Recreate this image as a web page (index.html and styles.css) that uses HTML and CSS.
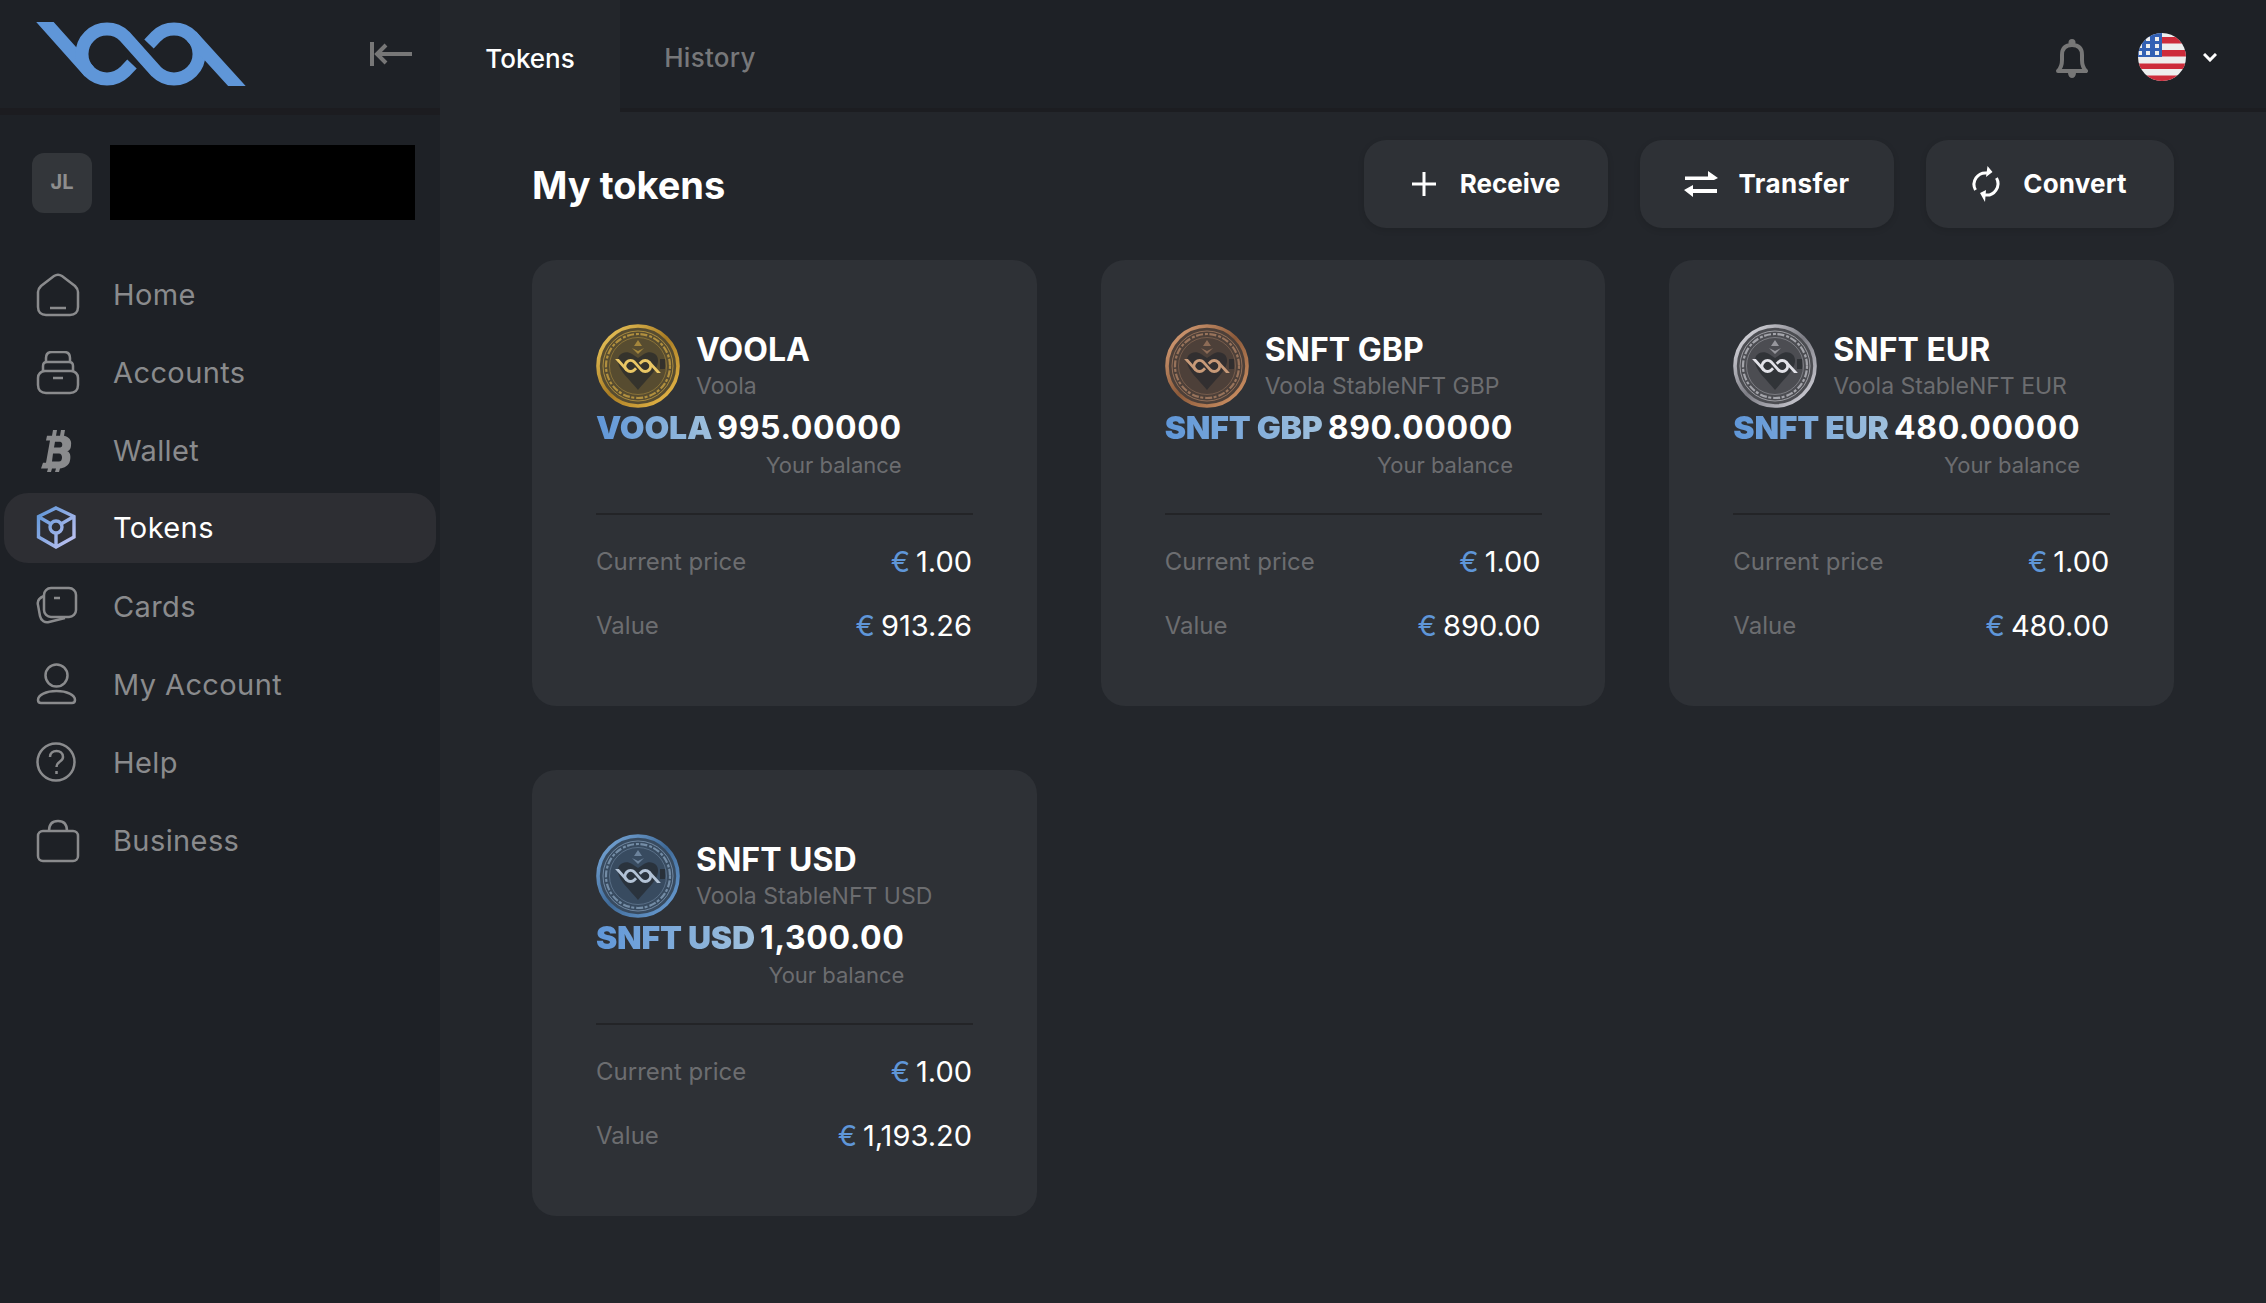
FILE: index.html
```html
<!DOCTYPE html>
<html lang="en">
<head>
<meta charset="utf-8">
<title>My tokens</title>
<link rel="stylesheet" href="styles.css">
</head>
<body>
<svg class="defs" width="0" height="0" aria-hidden="true">
  <defs>
    <linearGradient id="gold" x1="0" y1="0" x2="1" y2="1"><stop offset="0" stop-color="#f3cf62"/><stop offset=".5" stop-color="#a97c23"/><stop offset="1" stop-color="#efc04e"/></linearGradient>
    <linearGradient id="bronze" x1="0" y1="0" x2="1" y2="1"><stop offset="0" stop-color="#e0a77e"/><stop offset=".5" stop-color="#8c5a3a"/><stop offset="1" stop-color="#d89a6b"/></linearGradient>
    <linearGradient id="silver" x1="0" y1="0" x2="1" y2="1"><stop offset="0" stop-color="#e8e8ee"/><stop offset=".5" stop-color="#7d7d85"/><stop offset="1" stop-color="#dcdce4"/></linearGradient>
    <linearGradient id="steel" x1="0" y1="0" x2="1" y2="1"><stop offset="0" stop-color="#7eaee0"/><stop offset=".5" stop-color="#3f6a98"/><stop offset="1" stop-color="#6fa3da"/></linearGradient>
    <linearGradient id="tok" gradientUnits="userSpaceOnUse" x1="2" y1="5" x2="40" y2="38"><stop offset="0" stop-color="#5f96d8"/><stop offset="1" stop-color="#c3c4f2"/></linearGradient>
    <symbol id="mark" viewBox="0 0 210 64">
      <g fill="none" stroke="currentColor" stroke-width="13">
        <path d="M0 -10 53.3 49.7A25 25 0 0 0 88.7 49.7L96 42"/>
        <path d="M53.3 49.7A25 25 0 0 1 88.7 14.3L120.3 49.7A25 25 0 0 0 155.7 14.3"/>
        <path d="M113 22 120.3 14.3A25 25 0 0 1 155.7 14.3L210 74"/>
      </g>
    </symbol>
    <symbol id="coin" viewBox="0 0 84 84">
      <circle cx="42" cy="42" r="40" fill="var(--face)" stroke="var(--rim)" stroke-width="3.6"/>
      <circle cx="42" cy="42" r="35" fill="none" stroke="var(--ink)" stroke-width=".8" opacity=".8"/>
      <circle cx="42" cy="42" r="32" fill="none" stroke="var(--ink)" stroke-width="2.2" stroke-dasharray="3 1.5 7 2" opacity=".7"/>
      <circle cx="42" cy="42" r="28.5" fill="none" stroke="var(--ink)" stroke-width=".7" opacity=".55"/>
      <path d="M22 38C21 29 30 26 36 30L42 34 48 30C54 26 63 29 62 38 61 47 50 56 42 66 34 56 23 47 22 38Z" fill="#23262b" opacity=".65"/>
      <path d="M42 16 46 22H38ZM36 24 42 30 48 24 42 27Z" fill="var(--ink)" opacity=".6"/>
      <rect x="64" y="35" width="5" height="10" fill="#23262b" opacity=".7"/>
      <use href="#mark" x="19" y="35" width="46" height="14"/>
    </symbol>
  </defs>
</svg>
<div class="app">
  <aside class="sidebar">
    <div class="brand">
      <svg class="logo"><use href="#mark"/></svg>
      <svg class="collapse" viewBox="0 0 42 24"><path fill="none" stroke="#777" stroke-width="4" d="M2 0V24M42 12H8M16 3 7 12 16 21"/></svg>
    </div>
    <div class="user">
      <div class="avatar">JL</div>
      <div class="redact"></div>
    </div>
    <nav class="nav">
      <a class="item"><svg class="ico" viewBox="0 0 44 44"><path d="M2 19C2 16 3 15 5 13L18 3C21 1 23 1 26 3L39 13C41 15 42 16 42 19V34C42 39 39 42 34 42H10C5 42 2 39 2 34ZM14 35H30"/></svg><span>Home</span></a>
      <a class="item"><svg class="ico" viewBox="0 0 44 44"><path d="M2 27C2 23 5 20 9 20H35C39 20 42 23 42 27V34C42 39 39 42 34 42H10C5 42 2 39 2 34ZM7 20V15C7 12 9 11 11 11H33C35 11 37 12 37 15V20M10 11V7C10 3 12 1 16 1H28C32 1 34 3 34 7V11M17 27H27"/></svg><span>Accounts</span></a>
      <a class="item"><svg class="ico fill" viewBox="0 0 44 44"><g transform="translate(1 1) scale(1 1.17)"><path d="M16 0H20L19 5H23L24 0H28L27 5C32 6 35 9 34 13 34 16 32 18 30 18 33 19 34 22 33 26 32 31 27 32 23 33L22 36H18L19 33H15L14 36H10L11 33H4L6 28H9L13 9H9L10 5H15ZM18 10 17 15H23C26 15 26 10 23 10ZM16 20 15 27H22C26 27 26 20 22 20Z"/></g></svg><span>Wallet</span></a>
      <a class="item active"><svg class="ico tok" viewBox="0 0 44 44"><path d="M20 2 38 10.500V31L20 41 2.500 31V10.500ZM3 11 15 18M37 11 25 18M20 27V40"/><circle cx="20" cy="21" r="6"/></svg><span>Tokens</span></a>
      <a class="item"><svg class="ico" viewBox="0 0 44 44"><rect x="8" y="3" width="32" height="29" rx="7"/><path d="M8 11C3 13 1 16 2 20L4 31C5 36 9 38 13 37L29 33M18 13H24"/></svg><span>Cards</span></a>
      <a class="item"><svg class="ico" viewBox="0 0 44 44"><circle cx="20.500" cy="12.500" r="11"/><path d="M2 37C2 32 10 28 20.500 28S39 32 39 37C39 39 38 40 36 40H5C3 40 2 39 2 37Z"/></svg><span>My Account</span></a>
      <a class="item"><svg class="ico" viewBox="0 0 44 44"><circle cx="20" cy="21" r="18.500"/><path d="M14 16C14 12 17 10 20.500 10S27 12 27 16C27 21 20.500 20 20.500 26M20.500 30V33"/></svg><span>Help</span></a>
      <a class="item"><svg class="ico" viewBox="0 0 44 44"><rect x="2" y="12" width="40" height="30" rx="5"/><path d="M13 12C13 6 16 2 22 2S31 6 31 12"/></svg><span>Business</span></a>
    </nav>
  </aside>
  <div class="content">
    <header class="topbar">
      <div class="tabs">
        <a class="tab current">Tokens</a>
        <a class="tab">History</a>
      </div>
      <div class="tools">
        <svg class="bell" viewBox="0 0 32 39"><path fill="none" stroke="#777" stroke-width="4" stroke-linejoin="round" d="M2 32C5 29 6 26 6 21V16C6 9 10 6 16 6S26 9 26 16V21C26 26 27 29 30 32Z"/><circle cx="16" cy="3.500" r="3.500" fill="#777"/><path fill="#777" d="M12 34H20C20 37 18 39 16 39S12 37 12 34Z"/></svg>
        <svg class="flag" viewBox="0 0 48 48">
          <clipPath id="fc"><circle cx="24" cy="24" r="24"/></clipPath>
          <g clip-path="url(#fc)">
            <rect width="48" height="48" fill="#eee"/>
            <path fill="#cd2c3b" d="M24 4H48V10.500H24ZM24 17H48V23.500H24ZM0 30.500H48V36H0ZM0 42.500H48V48H0Z"/>
            <rect width="24" height="24" fill="#3260b4"/>
            <path fill="#eee" d="M8 4h4v4H8zM17 4h4v4h-4zM1 4h3v4H1zM8 11h4v4H8zM17 11h4v4h-4zM1 11h3v4H1zM8 18h4v4H8zM17 18h4v4h-4zM1 18h3v4H1z"/>
          </g>
        </svg>
        <svg class="chev" viewBox="0 0 14 9"><path fill="none" stroke="#fff" stroke-width="3" d="M1 1 7 7 13 1"/></svg>
      </div>
    </header>
    <main class="main">
      <div class="head">
        <h1>My tokens</h1>
        <div class="actions">
          <button class="btn btn-receive"><svg class="i-plus" viewBox="0 0 24 24"><path d="M12 0V24M0 12H24"/></svg>Receive</button>
          <button class="btn btn-transfer"><svg class="i-swap" viewBox="0 0 34 26"><path class="solid" d="M1 5.500H24V0L34 7 30 9H1ZM33 18V22H9V26L0 19 9 14V18Z"/></svg>Transfer</button>
          <button class="btn btn-convert"><svg class="i-sync" viewBox="0 0 26 36"><path d="M2.500 24A11.500 11.500 0 0 1 14 7M23.500 12A11.500 11.500 0 0 1 12 29"/><path class="solid" d="M14.500 0 19.500 6 13 11ZM7 27 13 24 12 36Z"/></svg>Convert</button>
        </div>
      </div>
      <section class="grid">
        <article class="card">
          <div class="token"><svg class="coin c-gold"><use href="#coin"/></svg><div><div class="name">VOOLA</div><div class="sub">Voola</div></div></div>
          <div class="bal-wrap"><div class="bal"><b class="grad">VOOLA</b> 995.00000</div><div class="bal-note">Your balance</div></div>
          <div class="rule"></div>
          <div class="row"><span>Current price</span><em><i>€</i>1.00</em></div>
          <div class="row"><span>Value</span><em><i>€</i>913.26</em></div>
        </article>
        <article class="card">
          <div class="token"><svg class="coin c-bronze"><use href="#coin"/></svg><div><div class="name">SNFT GBP</div><div class="sub">Voola StableNFT GBP</div></div></div>
          <div class="bal-wrap"><div class="bal"><b class="grad">SNFT GBP</b> 890.00000</div><div class="bal-note">Your balance</div></div>
          <div class="rule"></div>
          <div class="row"><span>Current price</span><em><i>€</i>1.00</em></div>
          <div class="row"><span>Value</span><em><i>€</i>890.00</em></div>
        </article>
        <article class="card">
          <div class="token"><svg class="coin c-silver"><use href="#coin"/></svg><div><div class="name">SNFT EUR</div><div class="sub">Voola StableNFT EUR</div></div></div>
          <div class="bal-wrap"><div class="bal"><b class="grad">SNFT EUR</b> 480.00000</div><div class="bal-note">Your balance</div></div>
          <div class="rule"></div>
          <div class="row"><span>Current price</span><em><i>€</i>1.00</em></div>
          <div class="row"><span>Value</span><em><i>€</i>480.00</em></div>
        </article>
        <article class="card">
          <div class="token"><svg class="coin c-steel"><use href="#coin"/></svg><div><div class="name">SNFT USD</div><div class="sub">Voola StableNFT USD</div></div></div>
          <div class="bal-wrap"><div class="bal"><b class="grad">SNFT USD</b> 1,300.00</div><div class="bal-note">Your balance</div></div>
          <div class="rule"></div>
          <div class="row"><span>Current price</span><em><i>€</i>1.00</em></div>
          <div class="row"><span>Value</span><em><i>€</i>1,193.20</em></div>
        </article>
      </section>
    </main>
  </div>
</div>
</body>
</html>
```
FILE: styles.css
```css
* { box-sizing: border-box; }
html, body { margin: 0; height: 100%; }
body { background: #23262b; color: #fff; font-family: Inter, "Noto Sans", sans-serif; overflow: hidden; }
.defs { display: block; height: 0; position: absolute; }
.app { display: flex; height: 1303px; }
.sidebar { width: 440px; flex: none; background: #1e2126; }
.brand { height: 115px; padding: 22px 28px 0 36px; display: flex; justify-content: space-between; align-items: flex-start; border-bottom: 7px solid #1c1c20; }
.logo { width: 210px; height: 64px; display: block; color: #5f96d8; }
.collapse { width: 42px; height: 24px; margin-top: 20px; }
.user { display: flex; align-items: center; gap: 18px; padding: 30px 24px 0 32px; }
.avatar { width: 60px; height: 60px; padding-bottom: 2px; border-radius: 12px; background: #33363a; color: #8e8e8e; font-size: 20px; font-weight: 700; display: flex; align-items: center; justify-content: center; }
.redact { width: 305px; height: 75px; background: #000; }
.nav { margin-top: 46px; padding: 0 4px; display: flex; flex-direction: column; gap: 21px; }
.item { height: 57px; padding-left: 32px; display: flex; align-items: center; gap: 33px; font-size: 29px; color: #8a8b8d; border-radius: 24px; }
.item span { letter-spacing: .4px; }
.item.active { background: #2d2e33; color: #fff; height: 70px; margin: -7px 0 -6px; padding-bottom: 1px; }
.ico { width: 44px; height: 44px; fill: none; stroke: #8a8b8d; stroke-width: 2.5; flex: none; }
.ico.fill { fill: #8a8b8d; stroke: none; }
.ico.tok { stroke: url(#tok); stroke-width: 3.4; }
.content { flex: 1; min-width: 0; display: flex; flex-direction: column; }
.topbar { height: 112px; background: #1e2126; display: flex; justify-content: space-between; border-bottom: 4px solid #1c1d21; padding-right: 49px; }
.tabs { display: flex; }
.tab { width: 180px; padding-top: 6px; display: flex; align-items: center; justify-content: center; font-size: 26px; font-weight: 500; color: #77787a; letter-spacing: .3px; }
.tab.current { background: #23262b; color: #fff; margin-bottom: -4px; padding-top: 4px; letter-spacing: 0; }
.tools { display: flex; align-items: center; padding-top: 6px; }
.bell { width: 32px; height: 39px; margin-right: 50px; margin-top: 2px; }
.flag { width: 48px; height: 48px; }
.chev { width: 14px; height: 9px; margin-left: 17px; }
.main { padding: 28px 92px 0; }
.head { display: flex; justify-content: space-between; align-items: center; height: 88px; }
h1 { margin: 2px 0 0; font-size: 38px; font-weight: 700; }
.actions { display: flex; gap: 32px; }
.btn { height: 88px; padding: 0 0 2px; display: flex; align-items: center; justify-content: center; background: #2e3136; border: 0; border-radius: 22px; color: #fff; font: 700 26px Inter, sans-serif; box-shadow: 0 2px 6px rgba(0, 0, 0, .12); }
.btn svg { fill: none; stroke: #fff; stroke-width: 3; overflow: visible; margin-top: 2px; }
.btn .solid { fill: #fff; stroke: none; }
.btn-receive { width: 244px; gap: 24px; }
.btn-transfer { width: 254px; gap: 20px; letter-spacing: .4px; }
.btn-convert { width: 248px; gap: 24px; letter-spacing: .2px; }
.i-plus { width: 24px; height: 24px; }
.i-swap { width: 34px; height: 26px; }
.i-sync { width: 26px; height: 36px; }
.grid { display: grid; grid-template-columns: repeat(3, 1fr); gap: 64px; margin-top: 32px; }
.card { height: 446px; padding: 64px 0 0 64px; background: #2e3136; border-radius: 24px; }
.token { display: flex; gap: 16px; align-items: center; height: 84px; }
.coin { width: 84px; height: 84px; flex: none; }
.c-gold { --face: #574c30; --rim: url(#gold); --ink: #d7ad45; color: #eac765; }
.c-bronze { --face: #4d4039; --rim: url(#bronze); --ink: #b8896a; color: #c89a78; }
.c-silver { --face: #4c4d52; --rim: url(#silver); --ink: #c9c9d0; color: #e2e2e8; }
.c-steel { --face: #384b60; --rim: url(#steel); --ink: #8fa9c4; color: #b3c3d6; }
.name { font-size: 32px; font-weight: 700; line-height: 38px; }
.sub { font-size: 23px; line-height: 30px; color: #6c6d70; margin-top: 2px; }
.bal-wrap { display: inline-block; margin-top: 1px; }
.bal { font-size: 32px; font-weight: 700; line-height: 38px; white-space: nowrap; letter-spacing: .6px; word-spacing: -3px; }
.grad { background: linear-gradient(90deg, #5f96d8, #9fc0dc); -webkit-background-clip: text; background-clip: text; color: transparent; letter-spacing: -.2px; word-spacing: 0; }
.bal-note { font-size: 22px; line-height: 28px; color: #6c6d70; text-align: right; margin-top: 4px; letter-spacing: 0; word-spacing: 0; }
.rule { height: 2px; background: #232427; width: 377px; margin-top: 34px; }
.row { display: flex; justify-content: space-between; width: 376px; height: 30px; margin-top: 34px; align-items: center; font-size: 24px; color: #6c6d70; }
.rule + .row { margin-top: 31px; }
.row em { font-style: normal; color: #fff; font-size: 29px; }
.row i { font-style: normal; color: #5f96d8; margin-right: 6px; }
```
